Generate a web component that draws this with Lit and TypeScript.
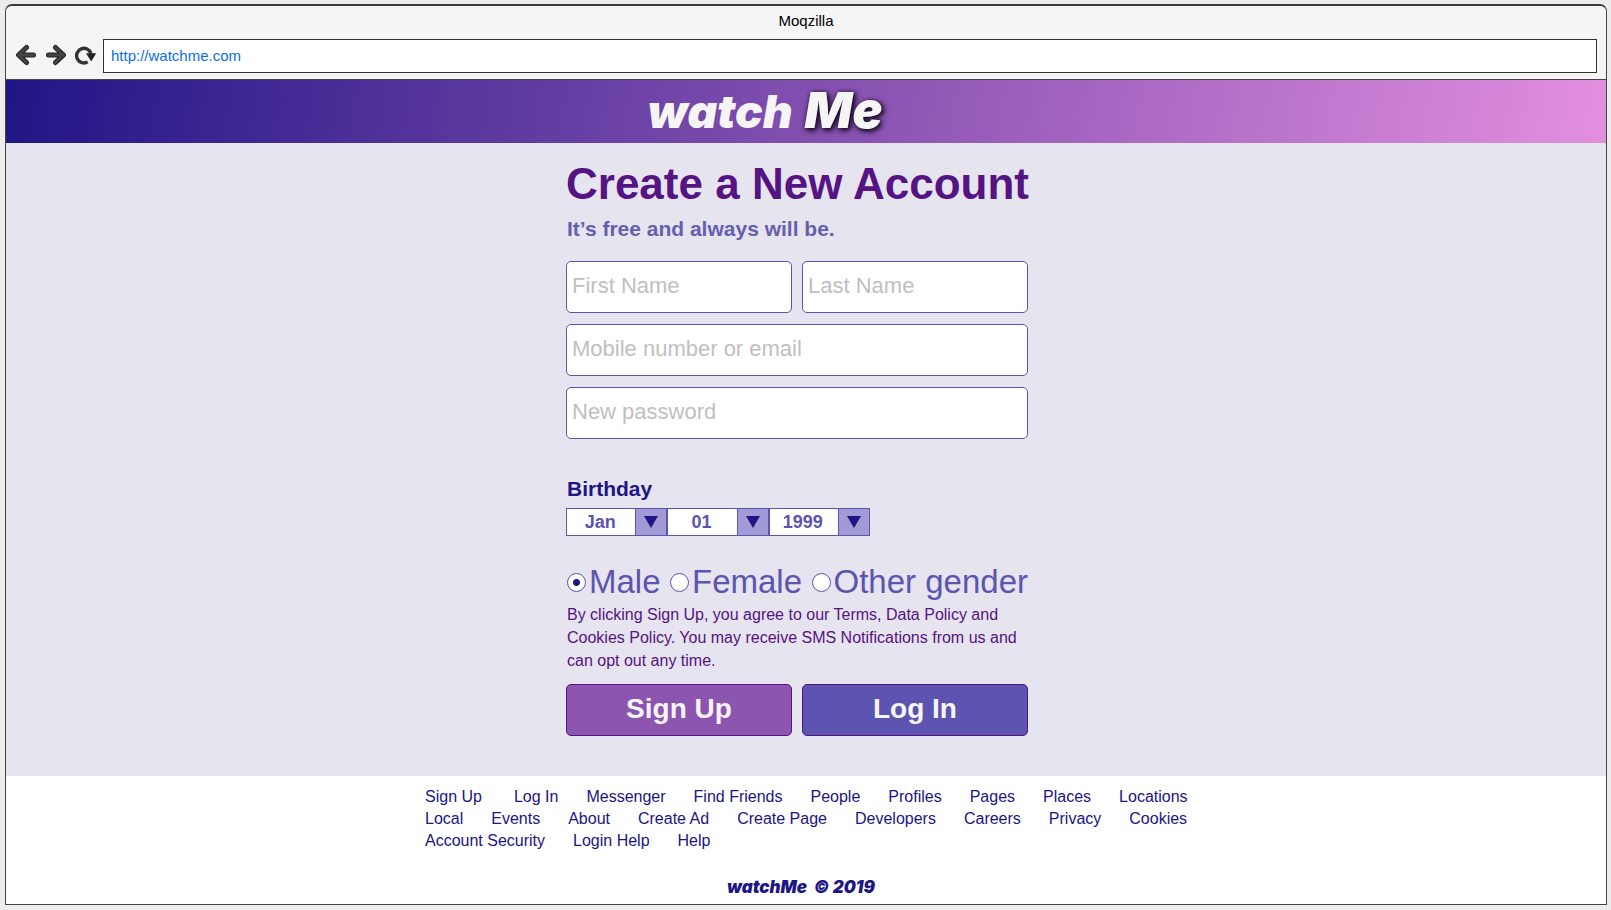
import { LitElement, html, css, svg } from "lit";
import { customElement, property, state } from "lit/decorators.js";

const FOOTER_LINKS = [
  "Sign Up", "Log In", "Messenger", "Find Friends", "People", "Profiles", "Pages", "Places", "Locations",
  "Local", "Events", "About", "Create Ad", "Create Page", "Developers", "Careers", "Privacy", "Cookies",
  "Account Security", "Login Help", "Help",
];

const MONTHS = ["Jan", "Feb", "Mar", "Apr", "May", "Jun", "Jul", "Aug", "Sep", "Oct", "Nov", "Dec"];
const DAYS = Array.from({ length: 31 }, (_, i) => String(i + 1).padStart(2, "0"));
const YEARS = Array.from({ length: 60 }, (_, i) => String(1999 - i));

const ARROW = svg`
  <path d="M18.5 11H6M11.5 3.5L3.5 11l8 7.5" fill="none" stroke="#222" stroke-width="5" stroke-linecap="round" stroke-linejoin="round"/>
  <path d="M18.5 11H6M11.5 3.5L3.5 11l8 7.5" fill="none" stroke="#444" stroke-width="3" stroke-linecap="round" stroke-linejoin="round"/>`;

@customElement("browser-bar")
class BrowserBar extends LitElement {
  @property() heading = "";
  @property() address = "";

  static styles = css`
    :host {
      display: block;
      background: #f5f5f5;
      border: 1px solid #444;
      border-top: 2px solid #3c3a3e;
      border-radius: 7px 7px 0 0;
      padding: 5px 9px 6px;
    }
    .title {
      font-size: 15px;
      line-height: 20px;
      text-align: center;
      color: #000;
    }
    .tools {
      display: flex;
      align-items: center;
      gap: 8px;
      margin-top: 8px;
    }
    .nav {
      display: block;
      flex: none;
      padding: 0 0 2px;
      border: 0;
      background: none;
      width: 22px;
      height: 24px;
    }
    .nav svg {
      display: block;
    }
    .forward svg {
      transform: scaleX(-1);
    }
    .address {
      flex: 1;
      min-width: 0;
      box-sizing: border-box;
      height: 34px;
      margin-left: -2px;
      padding: 0 7px 2px;
      border: 1px solid #333;
      background: #fff;
      color: #0b6fe8;
      font: 15px "Liberation Sans", Arial, sans-serif;
    }
  `;

  render() {
    return html`
      <div class="title">${this.heading}</div>
      <div class="tools">
        <button class="nav" aria-label="Back"><svg width="22" height="22" viewBox="0 0 22 22">${ARROW}</svg></button>
        <button class="nav forward" aria-label="Forward"><svg width="22" height="22" viewBox="0 0 22 22">${ARROW}</svg></button>
        <button class="nav" aria-label="Reload">
          <svg width="22" height="22" viewBox="0 0 22 22">
            <path d="M12.7 17.9A7.3 7.3 0 1 1 15.9 9.5" fill="none" stroke="#333" stroke-width="3.4"/>
            <path d="M11 9.2H21.2L16.2 17.6z" fill="#222"/>
          </svg>
        </button>
        <input class="address" type="text" aria-label="Address" .value=${this.address} />
      </div>
    `;
  }
}

@customElement("date-select")
class DateSelect extends LitElement {
  @property() label = "";
  @property({ attribute: false }) options: string[] = [];

  static styles = css`
    :host {
      display: grid;
      grid-template-columns: 1fr 32px;
      height: 28px;
    }
    .select {
      grid-area: 1 / 1 / 2 / 3;
      appearance: none;
      box-sizing: border-box;
      width: 100%;
      margin: 0;
      padding: 0 33px 0 0;
      border: 1px solid #5c54b0;
      border-radius: 0;
      background: #fff;
      color: #5c54b0;
      font: bold 18px "Liberation Sans", Arial, sans-serif;
      text-align: center;
      text-align-last: center;
    }
    .arrow {
      grid-area: 1 / 2 / 2 / 3;
      z-index: 1;
      display: flex;
      align-items: center;
      justify-content: center;
      border: 1px solid #5c54b0;
      background: #a19ad6;
      pointer-events: none;
    }
  `;

  render() {
    return html`
      <select class="select" aria-label=${this.label}>
        ${this.options.map((o) => html`<option>${o}</option>`)}
      </select>
      <span class="arrow">
        <svg width="14" height="12" viewBox="0 0 14 12"><path d="M0 0h14L7 12z" fill="#201585"/></svg>
      </span>
    `;
  }
}

@customElement("signup-form")
class SignupForm extends LitElement {
  @state() private gender = "Male";

  static styles = css`
    :host {
      display: block;
      box-sizing: border-box;
      width: 100%;
      max-width: 462px;
    }
    h1 {
      margin: 0;
      font-size: 44px;
      line-height: 50px;
      white-space: nowrap;
      color: #551383;
    }
    .lead {
      margin: 8px 0 0;
      padding-left: 1px;
      font-size: 21px;
      line-height: 24px;
      font-weight: bold;
      color: #665fae;
    }
    .fields,
    .actions {
      display: grid;
      grid-template-columns: 1fr 1fr;
      gap: 11px 10px;
    }
    .fields {
      margin-top: 20px;
    }
    .field {
      box-sizing: border-box;
      width: 100%;
      min-width: 0;
      height: 52px;
      margin: 0;
      padding: 0 5px 2px;
      border: 1px solid #5c54b0;
      border-radius: 5px;
      background: #fff;
      color: #5c54b0;
      font: 22px "Liberation Sans", Arial, sans-serif;
    }
    .field::placeholder {
      color: #bfbfbf;
      opacity: 1;
    }
    .wide {
      grid-column: 1 / -1;
    }
    fieldset {
      margin: 0;
      padding: 0;
      border: 0;
      min-width: 0;
    }
    legend {
      padding: 0 0 0 1px;
    }
    .birthday {
      margin-top: 38px;
    }
    .birthday legend {
      font-size: 21px;
      line-height: 24px;
      font-weight: bold;
      color: #201585;
    }
    .dates {
      display: grid;
      grid-template-columns: repeat(3, 1fr);
      width: 304px;
      margin-top: 7px;
    }
    .genders {
      display: flex;
      justify-content: space-between;
      margin-top: 27px;
      padding-left: 1px;
    }
    .choice {
      display: flex;
      align-items: center;
      gap: 3px;
      font-size: 33px;
      line-height: 38px;
      white-space: nowrap;
      color: #5c54b0;
    }
    .radio {
      appearance: none;
      box-sizing: border-box;
      width: 19px;
      height: 19px;
      margin: 0;
      border: 1px solid #5c54b0;
      border-radius: 50%;
      background: #fff;
    }
    .radio:checked {
      background: radial-gradient(circle, #201585 0 3px, #fff 4px);
    }
    .terms {
      margin: 2px 0 0;
      padding-left: 1px;
      font-size: 16px;
      line-height: 23px;
      color: #551383;
    }
    .actions {
      margin-top: 12px;
    }
    .action {
      height: 52px;
      padding: 0 0 2px;
      border: 1px solid #551383;
      border-radius: 5px;
      color: #f5f5f5;
      font: bold 28px "Liberation Sans", Arial, sans-serif;
    }
    .sign-up {
      background: #8c55b0;
    }
    .log-in {
      background: #5c54b0;
    }
  `;

  render() {
    return html`
      <form @submit=${(e: Event) => e.preventDefault()}>
        <h1>Create a New Account</h1>
        <p class="lead">It’s free and always will be.</p>
        <div class="fields">
          <input class="field" type="text" placeholder="First Name" aria-label="First Name" />
          <input class="field" type="text" placeholder="Last Name" aria-label="Last Name" />
          <input class="field wide" type="text" placeholder="Mobile number or email" aria-label="Mobile number or email" />
          <input class="field wide" type="password" placeholder="New password" aria-label="New password" />
        </div>
        <fieldset class="birthday">
          <legend>Birthday</legend>
          <div class="dates">
            <date-select label="Month" .options=${MONTHS}></date-select>
            <date-select label="Day" .options=${DAYS}></date-select>
            <date-select label="Year" .options=${YEARS}></date-select>
          </div>
        </fieldset>
        <div class="genders" role="radiogroup" aria-label="Gender">
          ${["Male", "Female", "Other gender"].map(
            (g) => html`<label class="choice">
              <input class="radio" type="radio" name="gender" .checked=${this.gender === g} @change=${() => (this.gender = g)} />
              <span>${g}</span>
            </label>`
          )}
        </div>
        <p class="terms">
          By clicking Sign Up, you agree to our Terms, Data Policy and Cookies Policy. You may receive SMS Notifications
          from us and can opt out any time.
        </p>
        <div class="actions">
          <button class="action sign-up" type="submit">Sign Up</button>
          <button class="action log-in" type="button">Log In</button>
        </div>
      </form>
    `;
  }
}

@customElement("app-root")
class AppRoot extends LitElement {
  static styles = css`
    :host {
      display: flex;
      flex-direction: column;
      box-sizing: border-box;
      min-height: 100vh;
      padding: 4px 4px 5px 5px;
      background: #ededed;
      font-family: "Liberation Sans", Arial, sans-serif;
    }
    .page {
      flex: 1;
      display: flex;
      flex-direction: column;
      border: 1px solid #444;
      border-top: 0;
      background: #fff;
    }
    .brand {
      display: flex;
      justify-content: center;
      align-items: baseline;
      gap: 12px;
      height: 63px;
      padding-right: 82px;
      background: linear-gradient(100deg, #201585, #8c55b4 55%, #e38fe0);
      color: #f5f5f5;
      font-family: Inter, "Liberation Sans", sans-serif;
      font-weight: 900;
      font-style: italic;
      font-size: 46px;
      line-height: 60px;
      box-sizing: border-box;
    }
    .me {
      font-size: 50px;
      text-shadow: 2px 2px 6px #1a0a24, 1px 1px 4px #1a0a24;
    }
    main {
      flex: 1;
      display: flex;
      justify-content: center;
      align-items: flex-start;
      padding: 16px 18px 40px 0;
      background: #e6e4ee;
    }
    footer {
      display: flex;
      flex-direction: column;
      align-items: center;
      padding: 10px 0 5px;
    }
    .links {
      display: flex;
      flex-wrap: wrap;
      column-gap: 28px;
      max-width: 766px;
      margin: 0;
      padding: 0 0 0 4px;
      list-style: none;
      font-size: 16px;
      line-height: 22px;
    }
    .links li:first-child {
      padding-right: 4px;
    }
    .links a {
      color: #201585;
      text-decoration: none;
    }
    .copyright {
      margin: 23px 0 0;
      padding-right: 10px;
      color: #201585;
      font: italic 900 17px/24px Inter, "Liberation Sans", sans-serif;
      white-space: pre;
    }
  `;

  render() {
    return html`
      <browser-bar heading="Moqzilla" address="http://watchme.com"></browser-bar>
      <div class="page">
        <header class="brand"><span>watch</span><span class="me">Me</span></header>
        <main><signup-form></signup-form></main>
        <footer>
          <ul class="links">
            ${FOOTER_LINKS.map((l) => html`<li><a href="#">${l}</a></li>`)}
          </ul>
          <p class="copyright">watchMe  © 2019</p>
        </footer>
      </div>
    `;
  }
}
